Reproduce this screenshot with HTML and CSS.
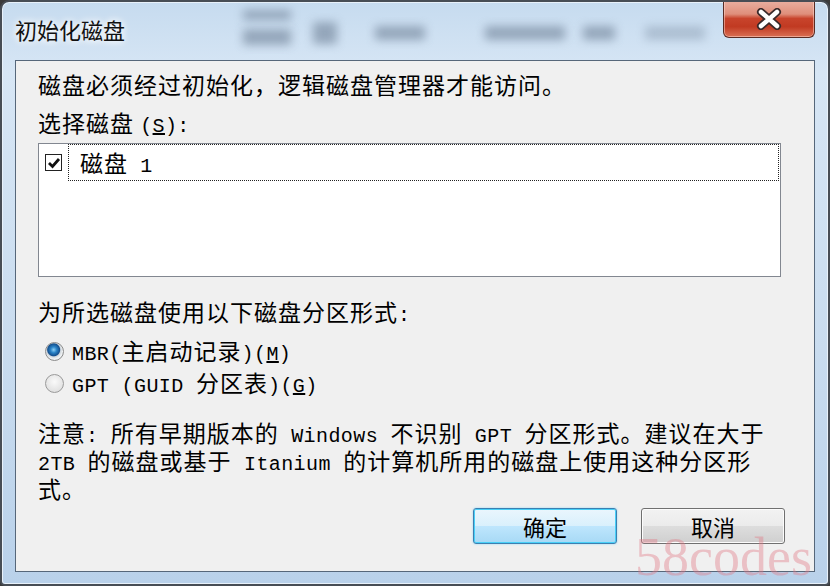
FILE: index.html
```html
<!DOCTYPE html>
<html lang="zh-CN">
<head>
    <meta charset="UTF-8">
    <meta name="viewport" content="width=device-width, initial-scale=1.0">
    <title>初始化磁盘</title>
    <link rel="stylesheet" href="styles.css">
</head>
<body>
    <div class="janela">
        <div class="titulo-barra">
            <div class="vidro">
                <span class="mancha m1"></span>
                <span class="mancha m2"></span>
                <span class="mancha m3"></span>
                <span class="mancha m4"></span>
                <span class="mancha m5"></span>
                <span class="mancha m6"></span>
                <span class="mancha m7"></span>
            </div>
            <span class="titulo">初始化磁盘</span>
            <button class="fechar">
                <svg width="26" height="22" viewBox="0 0 26 22">
                    <path d="M5 4 L21 18 M21 4 L5 18" stroke="#3a2a2a" stroke-width="8" stroke-linecap="round"/>
                    <path d="M5 4 L21 18 M21 4 L5 18" stroke="#fff" stroke-width="4.5" stroke-linecap="round"/>
                </svg>
            </button>
        </div>

        <div class="cliente">
            <p class="texto intro">磁盘必须经过初始化，逻辑磁盘管理器才能访问。</p>
            <p class="texto rotulo">选择磁盘 <span class="en">(<u>S</u>):</span></p>

            <div class="lista">
                <div class="item">
                    <span class="caixa">
                        <svg width="14" height="14" viewBox="0 0 14 14">
                            <path d="M2 7 L5.5 10.5 L12 3" fill="none" stroke="#111" stroke-width="2.8"/>
                        </svg>
                    </span>
                    <span class="foco"><span class="texto">磁盘 <span class="en">1</span></span></span>
                </div>
            </div>

            <p class="texto rotulo2">为所选磁盘使用以下磁盘分区形式<span class="en">:</span></p>

            <div class="opcoes">
                <div class="opcao">
                    <span class="radio marcado"></span>
                    <span class="texto"><span class="en">MBR(</span>主启动记录<span class="en">)(<u>M</u>)</span></span>
                </div>
                <div class="opcao">
                    <span class="radio"></span>
                    <span class="texto"><span class="en">GPT (GUID </span>分区表<span class="en">)(<u>G</u>)</span></span>
                </div>
            </div>

            <p class="texto nota">注意<span class="en">: </span>所有早期版本的<span class="en"> Windows </span>不识别<span class="en"> GPT </span>分区形式。建议在大于<br><span class="en">2TB </span>的磁盘或基于<span class="en"> Itanium </span>的计算机所用的磁盘上使用这种分区形<br>式。</p>

            <div class="botoes">
                <button class="btn btn-padrao">确定</button>
                <button class="btn">取消</button>
            </div>
        </div>

        <div class="marca">58codes</div>
    </div>
</body>
</html>
```

FILE: styles.css
```css
* {
    box-sizing: border-box;
}

body {
    margin: 0;
    background-color: #3a3a3a;
    font-family: "Noto Sans CJK SC", sans-serif;
}

.janela {
    position: relative;
    width: 830px;
    height: 586px;
    display: flex;
    flex-direction: column;
    padding: 0 13px 12px 13px;
    border: 2px solid #474d55;
    border-radius: 9px 9px 5px 5px;
    overflow: hidden;
    background: linear-gradient(to bottom, #c6dbef, #d7e6f5 12%, #c9dcef 60%, #b9d1ea);
    box-shadow: inset 0 0 0 1px #e8f1fa;
}

/*barra de titulo*/
.titulo-barra {
    position: relative;
    height: 58px;
    display: flex;
    justify-content: space-between;
    align-items: flex-start;
    flex-shrink: 0;
}

.vidro {
    position: absolute;
    inset: 0;
    overflow: hidden;
}

.mancha {
    position: absolute;
    background-color: #6f8197;
    filter: blur(5px);
    opacity: 0.6;
}
.m1 { left: 228px; top: 8px;  width: 48px; height: 10px; }
.m2 { left: 228px; top: 27px; width: 48px; height: 16px; }
.m3 { left: 298px; top: 20px; width: 24px; height: 22px; }
.m4 { left: 360px; top: 24px; width: 50px; height: 14px; }
.m5 { left: 470px; top: 24px; width: 80px; height: 14px; }
.m6 { left: 568px; top: 24px; width: 32px; height: 14px; }
.m7 { left: 630px; top: 24px; width: 60px; height: 14px; opacity: 0.35; }

.titulo {
    position: relative;
    margin-top: 12px;
    font-size: 22px;
    line-height: 30px;
    color: #111;
    text-shadow: 0 0 6px #fff, 0 0 10px #fff;
}

.fechar {
    position: relative;
    margin-top: -2px;
    width: 92px;
    height: 38px;
    border: 1px solid #5a2c24;
    border-top: none;
    border-radius: 0 0 6px 6px;
    padding: 0;
    display: flex;
    align-items: center;
    justify-content: center;
    background: linear-gradient(to bottom, #e9b1a3 0%, #df8f7b 38%, #c8442c 50%, #c13a22 72%, #da7054 100%);
    box-shadow: inset 0 0 0 1px rgba(255, 220, 210, 0.5);
}

/*area do cliente*/
.cliente {
    flex: 1;
    display: flex;
    flex-direction: column;
    padding: 10px 29px 0 22px;
    background-color: #f0f0f0;
    border: 1px solid #56677a;
}

.texto {
    margin: 0;
    font-size: 23px;
    line-height: 26px;
    letter-spacing: 1px;
    color: #000;
    white-space: nowrap;
}

.en {
    font-family: "Liberation Mono", monospace;
    font-size: 20px;
    line-height: 1;
    letter-spacing: 0.4px;
}

.rotulo {
    margin-top: 12px;
}

.lista {
    margin-top: 6px;
    width: 743px;
    height: 134px;
    border: 1px solid #828790;
    background-color: #fff;
}

.item {
    display: flex;
    align-items: center;
    height: 37px;
}

.caixa {
    width: 17px;
    height: 17px;
    margin-left: 6px;
    border: 1px solid #222;
    background-color: #fff;
    display: flex;
    align-items: center;
    justify-content: center;
}

.foco {
    flex: 1;
    height: 100%;
    margin-left: 6px;
    margin-right: 1px;
    padding-left: 11px;
    border: 1px dotted #222;
    display: flex;
    align-items: center;
}

.foco .en {
    margin-left: 6px;
}

.rotulo2 {
    margin-top: 21px;
}

.opcoes {
    margin-top: 10px;
    display: flex;
    flex-direction: column;
    gap: 2px;
}

.opcao {
    height: 30px;
    display: flex;
    align-items: center;
    gap: 8px;
    padding-left: 7px;
}

.radio {
    width: 19px;
    height: 19px;
    border-radius: 50%;
    border: 1px solid #9a9a9a;
    background: radial-gradient(circle at 50% 40%, #fafafa, #d8d8d8);
}

.radio.marcado {
    border-color: #8a8a8a;
    background: radial-gradient(circle at 45% 40%, #8fd0f5 0, #2a84c8 3px, #14508f 6px, #cfd6dc 7px, #eef1f3 9px);
}

.nota {
    margin-top: 21px;
}

/*botoes*/
.botoes {
    margin-top: 7px;
    display: flex;
    justify-content: flex-end;
    gap: 24px;
}

.btn {
    width: 144px;
    height: 36px;
    padding: 0;
    border: 1px solid #707070;
    border-radius: 3px;
    font-family: "Noto Sans CJK SC", sans-serif;
    font-size: 22px;
    color: #000;
    background: linear-gradient(to bottom, #f2f2f2 0%, #ebebeb 50%, #dddddd 51%, #cfcfcf 100%);
    box-shadow: inset 0 0 0 1px #fcfcfc;
}

.btn-padrao {
    border-color: #3c7fb1;
    background: linear-gradient(to bottom, #eaf6fd 0%, #d9f0fc 50%, #bee6fd 51%, #a7d9f5 100%);
    box-shadow: inset 0 0 0 1px #48d0f8, 0 0 2px #7fd3f7;
}

/*marca d'agua*/
.marca {
    position: absolute;
    left: 633px;
    top: 528px;
    font-family: "Liberation Serif", serif;
    font-size: 54px;
    line-height: 54px;
    color: rgba(226, 120, 132, 0.4);
    pointer-events: none;
}
```
